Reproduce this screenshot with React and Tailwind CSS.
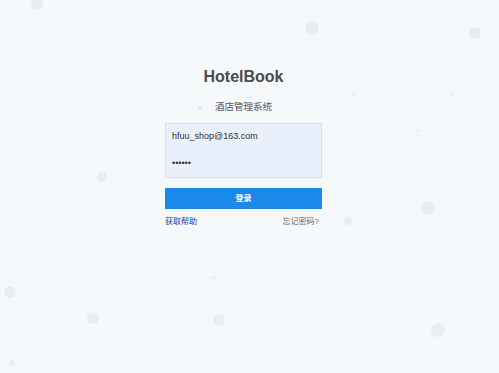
import React from "react";

const dots = [
  { x: 37, y: 4, r: 6 },
  { x: 312, y: 28, r: 7 },
  { x: 475, y: 33, r: 6 },
  { x: 102, y: 177, r: 5 },
  { x: 428, y: 208, r: 7 },
  { x: 348, y: 221, r: 4 },
  { x: 10, y: 292, r: 6 },
  { x: 93, y: 318, r: 6 },
  { x: 219, y: 320, r: 6 },
  { x: 438, y: 330, r: 7 },
  { x: 12, y: 363, r: 3 },
  { x: 200, y: 108, r: 2 },
  { x: 251, y: 97, r: 2 },
  { x: 354, y: 94, r: 1.5 },
  { x: 418, y: 130, r: 1.5 },
  { x: 213, y: 277, r: 1.5 },
  { x: 452, y: 94, r: 1.5 },
];

export default function App() {
  return (
    <div
      className="relative w-[499px] h-[373px] overflow-hidden bg-[#f6f9fc]"
      style={{ fontFamily: '"Liberation Sans", Arial, "Noto Sans CJK SC", sans-serif' }}
    >
      {/* particles */}
      {dots.map((d, i) => (
        <span
          key={i}
          className="absolute rounded-full bg-[#e8edf2]"
          style={{ left: d.x - d.r, top: d.y - d.r, width: d.r * 2, height: d.r * 2 }}
        />
      ))}

      <div className="relative flex flex-col w-[157px] ml-[165px] pt-[66px]">
        <h1 className="text-center text-[16px] leading-[21px] font-bold text-[#4b4b4b]">
          HotelBook
        </h1>
        <p className="text-center text-[9.5px] leading-[14px] text-[#555] mt-[13px]">
          酒店管理系统
        </p>

        <div className="mt-[9px] border border-[#dcdfe4] bg-[#e9effb]">
          <div className="h-[27px] flex items-center px-[6px] text-[9px] text-[#333] border-b border-[#edf1f8]">
            hfuu_shop@163.com
          </div>
          <div className="h-[26px] flex items-center px-[6px] text-[9px] text-[#333]">
            ••••••
          </div>
        </div>

        <button className="mt-[10px] h-[21px] bg-[#1a8aea] text-white text-[8px] font-bold flex items-center justify-center">
          登录
        </button>

        <div className="mt-[7px] flex justify-between text-[8px] leading-[12px] pr-[3px]">
          <span className="text-[#3434a8]">获取帮助</span>
          <span className="text-[#666]">忘记密码?</span>
        </div>
      </div>
    </div>
  );
}
